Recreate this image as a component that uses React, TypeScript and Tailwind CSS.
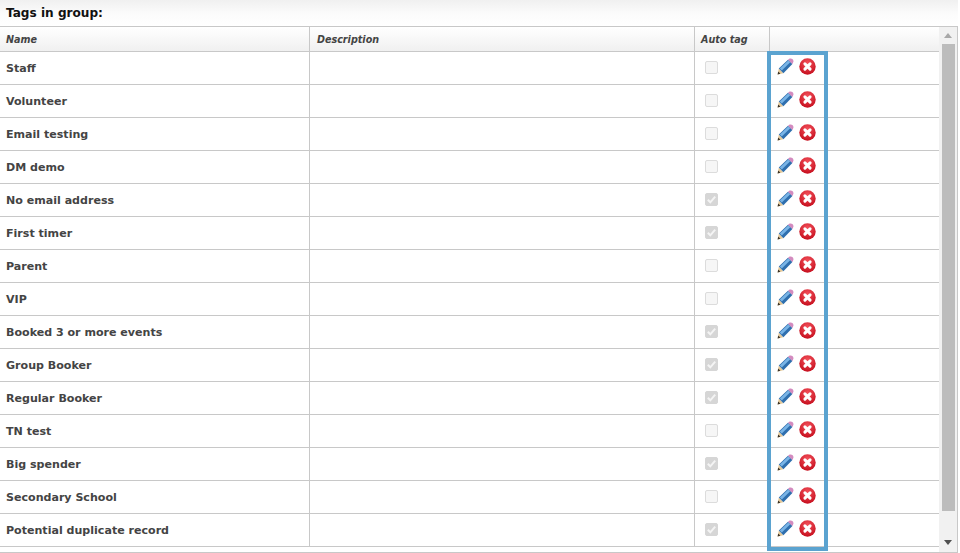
const rows: [string, boolean][] = [
  ["Staff", false],
  ["Volunteer", false],
  ["Email testing", false],
  ["DM demo", false],
  ["No email address", true],
  ["First timer", true],
  ["Parent", false],
  ["VIP", false],
  ["Booked 3 or more events", true],
  ["Group Booker", true],
  ["Regular Booker", true],
  ["TN test", false],
  ["Big spender", true],
  ["Secondary School", false],
  ["Potential duplicate record", true],
];

function Pencil() {
  return (
    <svg width="17" height="17" viewBox="0 0 17 17" className="shrink-0">
      <path d="M0.6 16.4 L1.8 10.6 L6.4 15.2 Z" fill="#e6c998" />
      <path d="M0.6 16.4 L1.2 13.6 L3.4 15.8 Z" fill="#3a3226" />
      <path d="M1.8 10.6 L11 1.8 L15.4 6 L6.4 15.2 Z" fill="#2f6fae" />
      <path d="M2.8 10.4 L11.2 2.4 L13.2 4.2 L4.8 12.6 Z" fill="#79b4e6" />
      <path d="M11 1.8 L12.6 0.6 Q14.2 0 15.4 1 L16.2 2 Q16.9 3.4 16 4.8 L15.4 6 Z" fill="#d38bbf" />
    </svg>
  );
}

function Del() {
  return (
    <svg width="17" height="17" viewBox="0 0 17 17" className="shrink-0 ml-[5px]">
      <defs>
        <radialGradient id="delg" cx="50%" cy="30%" r="70%">
          <stop offset="0%" stopColor="#f4525c" />
          <stop offset="100%" stopColor="#c60f1e" />
        </radialGradient>
      </defs>
      <circle cx="8.5" cy="8.5" r="8.2" fill="url(#delg)" />
      <path d="M5.9 5.9 L11.1 11.1 M11.1 5.9 L5.9 11.1" stroke="#fff" strokeWidth="3" strokeLinecap="round" />
    </svg>
  );
}

function Check({ on }: { on: boolean }) {
  return (
    <div className={`w-[13px] h-[13px] rounded-[2px] border flex items-center justify-center ${on ? "bg-[#d6d6d6] border-[#d6d6d6]" : "bg-[#f6f6f6] border-[#dcdcdc]"}`}>
      {on && (
        <svg width="11" height="11" viewBox="0 0 11 11">
          <path d="M1.8 5.8 L4.3 8.3 L9.2 2.6" fill="none" stroke="#f4f4f4" strokeWidth="2" />
        </svg>
      )}
    </div>
  );
}

export default function App() {
  return (
    <div className="relative w-[960px] h-[553px] overflow-hidden bg-white font-['DejaVu_Sans',sans-serif]">
      <div className="w-[958px] h-[27px] border-b border-[#c8c8c8] bg-gradient-to-b from-[#f0f0f0] via-[#fbfbfb] to-white flex items-center pl-[6px]">
        <span className="text-[12.1px] font-bold text-[#111]">Tags in group:</span>
      </div>
      <div className="flex w-[958px] h-[526px] border-b border-r border-[#c8c8c8]">
        <div className="w-[939px] shrink-0">
          <div className="flex h-[25px] border-b border-[#c8c8c8] bg-gradient-to-b from-white to-[#f0f0f0] text-[9.6px] font-bold italic text-[#444]">
            <div className="w-[310px] border-r border-[#c8c8c8] pl-[6px] pt-[2px] flex items-center">Name</div>
            <div className="w-[385px] border-r border-[#c8c8c8] pl-[7px] pt-[2px] flex items-center">Description</div>
            <div className="w-[75px] border-r border-[#c8c8c8] pl-[6px] pt-[2px] flex items-center">Auto tag</div>
            <div className="flex-1" />
          </div>
          {rows.map(([name, on]) => (
            <div key={name} className="flex h-[33px] border-b border-[#c8c8c8]">
              <div className="w-[310px] border-r border-[#c8c8c8] pl-[6px] pt-[2px] flex items-center text-[11.07px] font-bold text-[#444]">{name}</div>
              <div className="w-[385px] border-r border-[#c8c8c8]" />
              <div className="w-[75px] border-r border-[#c8c8c8] pl-[10px] pb-[1px] flex items-center"><Check on={on} /></div>
              <div className="flex-1 flex items-center pl-[7px] pb-[4px]">
                <Pencil />
                <Del />
              </div>
            </div>
          ))}
        </div>
        <div className="w-[18px] bg-[#f1f1f1] flex flex-col items-center">
          <div className="h-[17px] flex items-center justify-center">
            <svg width="8" height="5" viewBox="0 0 8 5"><path d="M4 0 L8 5 L0 5 Z" fill="#a8a8a8" /></svg>
          </div>
          <div className="w-[13px] h-[467px] bg-[#bcbcbc]" />
          <div className="flex-1 flex items-end justify-center pb-[7px]">
            <svg width="8" height="5" viewBox="0 0 8 5"><path d="M0 0 L8 0 L4 5 Z" fill="#505050" /></svg>
          </div>
        </div>
      </div>
      <div className="absolute left-[767px] top-[51px] w-[61px] h-[500px] border-[4px] border-[#5ba3d0]" />
    </div>
  );
}
